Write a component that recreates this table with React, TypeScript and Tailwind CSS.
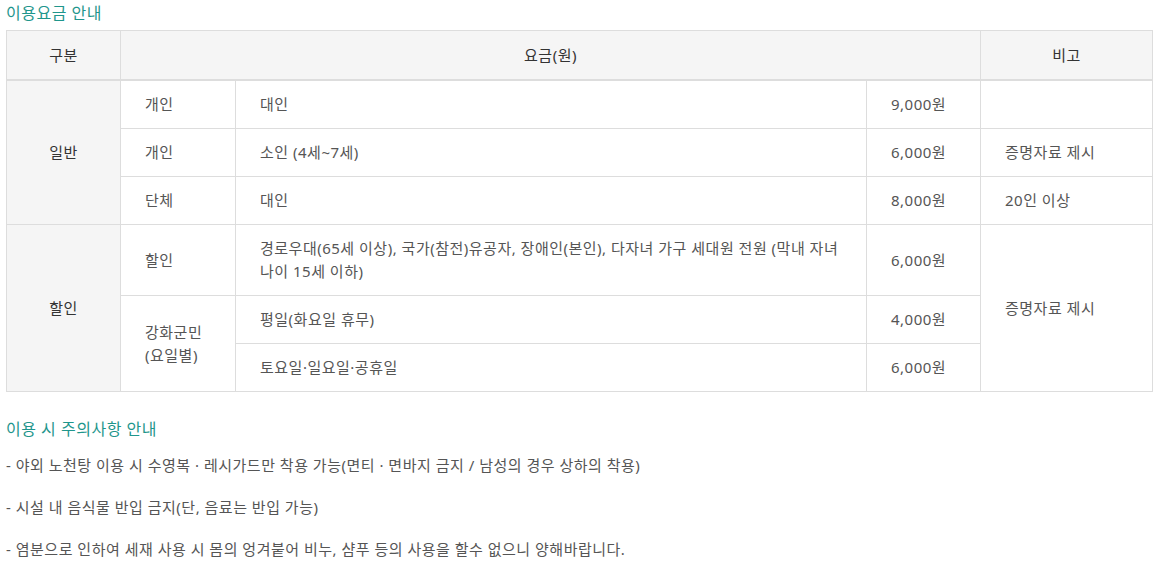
import React from "react";

const font = { fontFamily: '"Noto Sans", "Noto Sans CJK KR", sans-serif' };

const td = "border border-[#dddddd] px-6 py-3 leading-[23px] text-[15px] text-[#555555] text-left align-middle break-keep";
const tdHead = "border border-[#dddddd] bg-[#f5f5f5] px-3 py-3 leading-[23px] text-[15px] text-[#333333] text-center align-middle";

const notes = [
  "- 야외 노천탕 이용 시 수영복 · 레시가드만 착용 가능(면티 · 면바지 금지 / 남성의 경우 상하의 착용)",
  "- 시설 내 음식물 반입 금지(단, 음료는 반입 가능)",
  "- 염분으로 인하여 세재 사용 시 몸의 엉겨붙어 비누, 샴푸 등의 사용을 할수 없으니 양해바랍니다.",
];

export default function App() {
  return (
    <div className="w-[1160px] h-[567px] bg-white px-[6px] pt-[2px] overflow-hidden tracking-[0.5px]" style={font}>
      <h2 className="text-[16px] leading-[22px] text-[#1f968c] font-normal">이용요금 안내</h2>
      <table className="mt-[6px] w-[1146px] table-fixed border-collapse border border-[#dddddd]">
        <colgroup>
          <col className="w-[114px]" />
          <col className="w-[115px]" />
          <col className="w-[631px]" />
          <col className="w-[114px]" />
          <col className="w-[172px]" />
        </colgroup>
        <thead>
          <tr>
            <th className={`${tdHead} pt-[13px] font-normal border-b-2`}>구분</th>
            <th colSpan={3} className={`${tdHead} pt-[13px] font-normal border-b-2`}>
              요금(원)
            </th>
            <th className={`${tdHead} pt-[13px] font-normal border-b-2`}>비고</th>
          </tr>
        </thead>
        <tbody>
          <tr>
            <td rowSpan={3} className={tdHead}>일반</td>
            <td className={td}>개인</td>
            <td className={td}>대인</td>
            <td className={td}>9,000원</td>
            <td className={td}></td>
          </tr>
          <tr>
            <td className={td}>개인</td>
            <td className={td}>소인 (4세~7세)</td>
            <td className={td}>6,000원</td>
            <td className={td}>증명자료 제시</td>
          </tr>
          <tr>
            <td className={td}>단체</td>
            <td className={td}>대인</td>
            <td className={td}>8,000원</td>
            <td className={td}>20인 이상</td>
          </tr>
          <tr>
            <td rowSpan={3} className={tdHead}>할인</td>
            <td className={td}>할인</td>
            <td className={td}>
              경로우대(65세 이상), 국가(참전)유공자, 장애인(본인), 다자녀 가구 세대원 전원 (막내 자녀 나이 15세 이하)
            </td>
            <td className={td}>6,000원</td>
            <td rowSpan={3} className={td}>증명자료 제시</td>
          </tr>
          <tr>
            <td rowSpan={2} className={td}>강화군민 (요일별)</td>
            <td className={td}>평일(화요일 휴무)</td>
            <td className={td}>4,000원</td>
          </tr>
          <tr>
            <td className={td}>토요일·일요일·공휴일</td>
            <td className={td}>6,000원</td>
          </tr>
        </tbody>
      </table>

      <h3 className="mt-[26px] text-[16px] leading-[22px] text-[#1f968c] font-normal">이용 시 주의사항 안내</h3>
      <ul className="mt-[14px] flex flex-col gap-[19px]">
        {notes.map((n) => (
          <li key={n} className="text-[15px] leading-[23px] text-[#555555]">
            {n}
          </li>
        ))}
      </ul>
    </div>
  );
}
